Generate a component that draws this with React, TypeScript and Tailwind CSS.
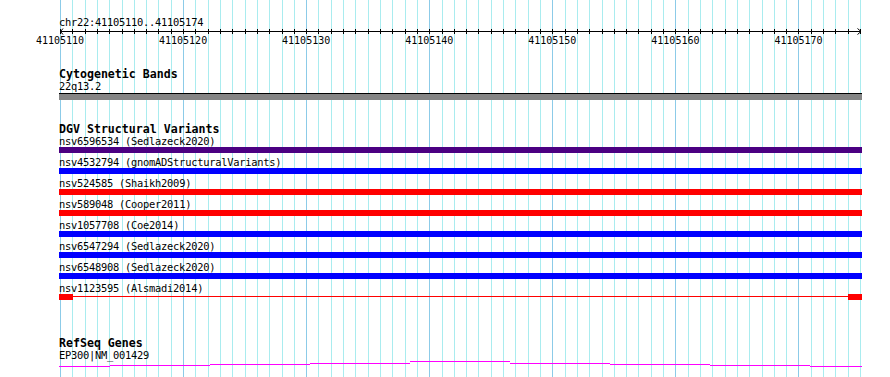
const BP = 800 / 65;
const MONO = "font-['DejaVu_Sans_Mono','Liberation_Mono',monospace]";

const variants = [
  { id: "nsv6596534", src: "Sedlazeck2020", color: "bg-[#4b0082]" },
  { id: "nsv4532794", src: "gnomADStructuralVariants", color: "bg-[#0000ff]" },
  { id: "nsv524585", src: "Shaikh2009", color: "bg-[#ff0000]" },
  { id: "nsv589048", src: "Cooper2011", color: "bg-[#ff0000]" },
  { id: "nsv1057708", src: "Coe2014", color: "bg-[#0000ff]" },
  { id: "nsv6547294", src: "Sedlazeck2020", color: "bg-[#0000ff]" },
  { id: "nsv6548908", src: "Sedlazeck2020", color: "bg-[#0000ff]" },
];

// magenta gene model, stepped like the original render
const geneSteps: [number, number, number][] = [
  [59, 110, 5],
  [110, 210, 4],
  [210, 310, 3],
  [310, 410, 2],
  [410, 510, 0],
  [510, 610, 2],
  [610, 710, 3],
  [710, 810, 4],
  [810, 862, 5],
];

const ticks = Array.from({ length: 66 }, (_, i) => Math.round(60 + i * BP) + 0.5);

function Grid() {
  return (
    <svg className="absolute inset-0" width={890} height={377}>
      {ticks.map((x, i) => (
        <line
          key={i}
          x1={x}
          x2={x}
          y1={0}
          y2={377}
          stroke={i % 10 === 0 ? "#8ccbe8" : "#a9ecef"}
          strokeWidth={1}
        />
      ))}
    </svg>
  );
}

function Ruler() {
  return (
    <svg width={890} height={20} className="block">
      <line x1={60} x2={861} y1={3.5} y2={3.5} stroke="#000" />
      {ticks.map((x, i) => (
        <line key={i} x1={x} x2={x} y1={1} y2={6} stroke="#000" />
      ))}
      <polyline points="63,0.5 60.5,3.5 63,6.5" fill="none" stroke="#000" />
      <polyline points="857.5,0.5 861,3.5 857.5,6.5" fill="none" stroke="#000" />
      {Array.from({ length: 7 }, (_, k) => (
        <text
          key={k}
          x={60 + k * 10 * BP}
          y={16}
          textAnchor="middle"
          fontFamily="DejaVu Sans Mono, Liberation Mono, monospace"
          fontSize={10}
          fill="#000"
        >
          {41105110 + k * 10}
        </text>
      ))}
    </svg>
  );
}

function Title({ children }: { children: React.ReactNode }) {
  return <div className="text-[11.6px] leading-[12px] font-bold pl-[59px]">{children}</div>;
}

function Label({ children }: { children: React.ReactNode }) {
  return (
    <div className="text-[10.4px] tracking-[-0.25px] leading-[12px] pl-[59px] whitespace-pre">
      {children}
    </div>
  );
}

export default function App() {
  return (
    <div className={`relative w-[890px] h-[377px] bg-white overflow-hidden text-black ${MONO}`}>
      <Grid />
      <div className="relative flex flex-col pt-[16px]">
        <Label>chr22:41105110..41105174</Label>
        <Ruler />

        <div className="mt-[20px]">
          <Title>Cytogenetic Bands</Title>
          <Label>22q13.2</Label>
          <div className="ml-[59px] mt-px w-[803px] h-[7px] border-t border-black bg-[#858585]" />
        </div>

        <div className="mt-[23px]">
          <Title>DGV Structural Variants</Title>
          {variants.map((v) => (
            <div key={v.id} className="mb-[3px]">
              <Label>
                {v.id} ({v.src})
              </Label>
              <div className={`ml-[59px] w-[803px] h-[6px] ${v.color}`} />
            </div>
          ))}
          <div className="mb-[3px]">
            <Label>nsv1123595 (Alsmadi2014)</Label>
            <div className="ml-[59px] w-[803px] h-[6px] flex items-start">
              <div className="w-[14px] h-[6px] bg-[#ff0000]" />
              <div className="flex-1 h-px mt-[2px] bg-[#ff0000]" />
              <div className="w-[14px] h-[6px] bg-[#ff0000]" />
            </div>
          </div>
        </div>

        <div className="mt-[34px]">
          <Title>RefSeq Genes</Title>
          <Label>EP300|NM_001429</Label>
          <svg width={890} height={8} className="block">
            {geneSteps.map(([a, b, y], i) => (
              <rect key={i} x={a} y={y} width={b - a} height={1} fill="#ff00ff" />
            ))}
          </svg>
        </div>
      </div>
    </div>
  );
}
